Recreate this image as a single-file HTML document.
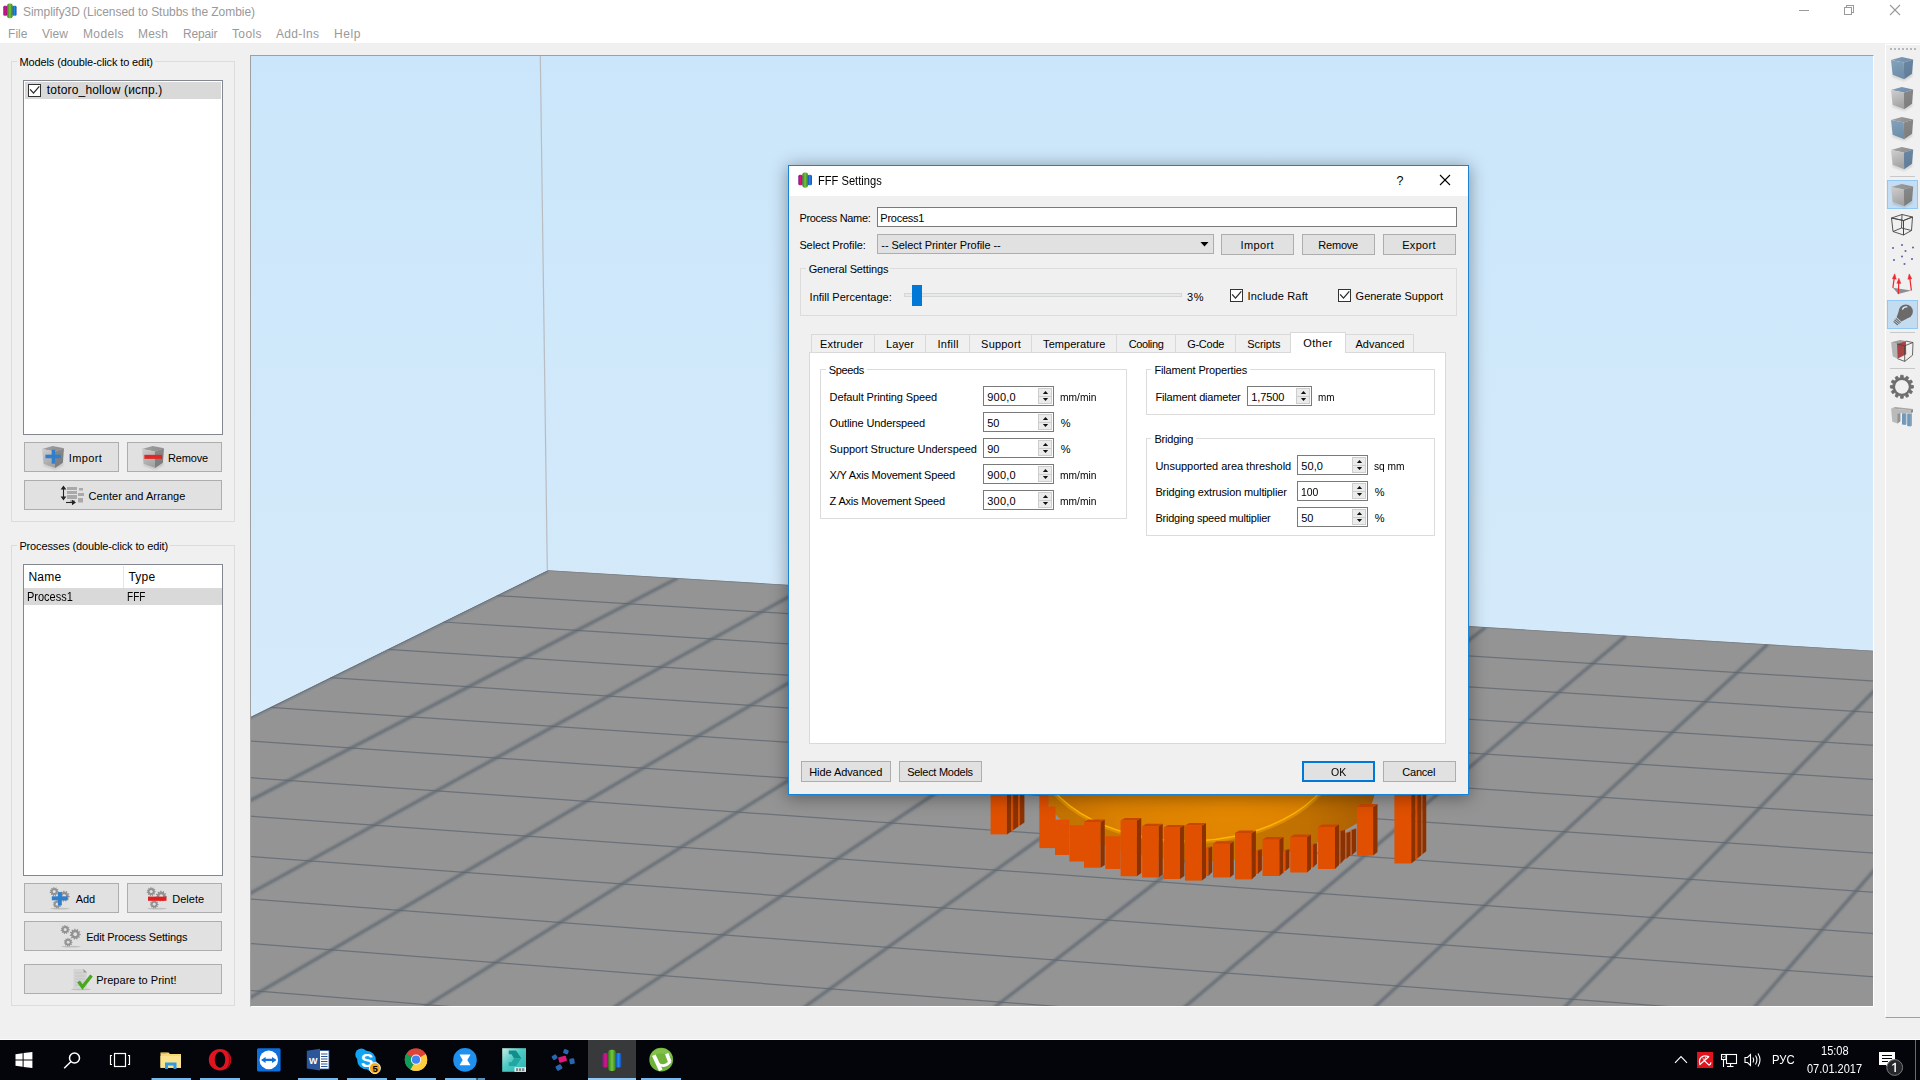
<!DOCTYPE html>
<html><head><meta charset="utf-8"><title>Simplify3D</title><style>
html,body{margin:0;padding:0;}
body{width:1920px;height:1080px;overflow:hidden;position:relative;background:#f0f0f0;font-family:"Liberation Sans",sans-serif;}
.t{position:absolute;white-space:nowrap;font-family:"Liberation Sans",sans-serif;}
.btn{position:absolute;box-sizing:border-box;background:#e1e1e1;border:1px solid #adadad;}
.gb{position:absolute;box-sizing:border-box;border:1px solid #dcdcdc;}
.abs{position:absolute;}
svg{position:absolute;overflow:visible;}
</style></head><body>
<div style="position:absolute;left:250px;top:55px;width:1624px;height:952px;box-sizing:border-box;border-top:1px solid #a0a0a0;border-left:1px solid #a0a0a0;border-right:1px solid #fff;border-bottom:1px solid #fff;"></div>
<svg style="left:251px;top:56px" width="1622" height="950" viewBox="251 56 1622 950"><defs><linearGradient id="sky" x1="0" y1="0" x2="0" y2="1"><stop offset="0" stop-color="#cbe6fa"/><stop offset="1" stop-color="#d6ebfb"/></linearGradient><clipPath id="vp"><rect x="251" y="56" width="1622" height="950"/></clipPath><radialGradient id="dome" cx="1230" cy="800" r="190" gradientUnits="userSpaceOnUse"><stop offset="0" stop-color="#e48800"/><stop offset="0.6" stop-color="#db8000"/><stop offset="1" stop-color="#c26e00"/></radialGradient><linearGradient id="dome2" x1="1040" y1="0" x2="1375" y2="0" gradientUnits="userSpaceOnUse"><stop offset="0" stop-color="#c27200"/><stop offset="0.45" stop-color="#c97800"/><stop offset="0.8" stop-color="#c07000"/><stop offset="1" stop-color="#a85c00"/></linearGradient><filter id="bl" x="-5%" y="-5%" width="110%" height="110%"><feGaussianBlur stdDeviation="0.45"/></filter><filter id="bl2" x="-5%" y="-5%" width="110%" height="110%"><feGaussianBlur stdDeviation="1.1"/></filter></defs><rect x="251" y="56" width="1622" height="700" fill="url(#sky)"/><line x1="540.3" y1="56" x2="547.3" y2="570" stroke="#b9bcc0" stroke-width="1.2"/><clipPath id="fl"><polygon points="548.0,570.2 1873,650.7 1873,1006 251,1006 251,716.8"/></clipPath><polygon points="548.0,570.2 1873,650.7 1873,1006 251,1006 251,716.8" fill="#949494"/><g clip-path="url(#fl)"><line x1="548.0" y1="571.7" x2="75.4" y2="805.0" stroke="#858a8f" stroke-width="3" /><line x1="548.0" y1="570.6" x2="75.4" y2="803.9" stroke="#6c727a" stroke-width="1.2" /><line x1="548.0" y1="570.5" x2="2056.3" y2="662.1" stroke="#7d8288" stroke-width="1.2" /><g stroke="#5d666f" stroke-opacity="0.75" stroke-width="1.25" filter="url(#bl)"><line x1="496.5" y1="595.6" x2="2332.2" y2="709.4"/><line x1="443.1" y1="622.0" x2="2311.7" y2="740.2"/><line x1="387.7" y1="649.3" x2="2290.4" y2="772.3"/><line x1="330.1" y1="677.7" x2="2268.2" y2="805.7"/><line x1="270.2" y1="707.3" x2="2245.0" y2="840.6"/><line x1="207.9" y1="738.1" x2="2220.8" y2="877.0"/><line x1="143.0" y1="770.1" x2="2195.4" y2="915.0"/><line x1="75.4" y1="803.5" x2="2169.0" y2="954.9"/><line x1="4.9" y1="838.3" x2="2141.2" y2="996.6"/><line x1="-68.8" y1="874.7" x2="2112.2" y2="1040.3"/><line x1="-145.8" y1="912.7" x2="2081.7" y2="1086.2"/><line x1="-226.4" y1="952.5" x2="2049.6" y2="1134.4"/><line x1="-310.7" y1="994.1" x2="2015.9" y2="1185.1"/><line x1="-399.2" y1="1037.8" x2="1980.3" y2="1238.6"/></g><g stroke="#5d666f" stroke-opacity="0.8" stroke-width="3.2" filter="url(#bl2)"><line x1="677.4" y1="578.1" x2="-322.0" y2="1098.4"/><line x1="808.4" y1="586.0" x2="-149.3" y2="1113.4"/><line x1="940.8" y1="594.1" x2="26.0" y2="1128.6"/><line x1="1074.6" y1="602.2" x2="204.2" y2="1144.1"/><line x1="1210.1" y1="610.4" x2="385.1" y2="1159.8"/><line x1="1347.1" y1="618.7" x2="568.9" y2="1175.7"/><line x1="1485.6" y1="627.2" x2="755.7" y2="1192.0"/><line x1="1625.8" y1="635.7" x2="945.5" y2="1208.4"/><line x1="1767.6" y1="644.3" x2="1138.5" y2="1225.2"/><line x1="1911.1" y1="653.0" x2="1334.6" y2="1242.2"/><line x1="2056.3" y1="661.8" x2="1533.9" y2="1259.5"/><line x1="2203.2" y1="670.8" x2="1736.7" y2="1277.1"/><line x1="2351.9" y1="679.8" x2="1942.8" y2="1295.0"/></g></g><g clip-path="url(#vp)"><path d="M1043,780 L1043.75,795 Q1049,812 1075,832 Q1130,862 1210,861 Q1300,858 1356,824 Q1372,810 1374.4,795 L1374.4,780 Z" fill="url(#dome2)"/><ellipse cx="1187.5" cy="745" rx="153.2" ry="97.2" fill="none" stroke="#f0a000" stroke-width="3.6" stroke-opacity="0.55"/><ellipse cx="1187.5" cy="745" rx="152" ry="96" fill="url(#dome)" stroke="#ffb400" stroke-width="1.5"/><rect x="990.60" y="780.00" width="16.30" height="54.40" fill="#e05000"/><polygon points="1006.90,780 1011.25,780 1011.25,831.44 1006.90,834.40" fill="#8c3200"/><polygon points="1011.25,780 1013.10,780 1013.10,830.18 1011.25,831.44" fill="#d44c00"/><polygon points="1013.10,780 1018.10,780 1018.10,826.78 1013.10,830.18" fill="#8c3200"/><polygon points="1018.10,780 1020.00,780 1020.00,825.49 1018.10,826.78" fill="#d44c00"/><polygon points="1020.00,780 1024.40,780 1024.40,822.50 1020.00,825.49" fill="#8c3200"/><rect x="1039.40" y="780.00" width="9.20" height="28.00" fill="#e05000"/><rect x="1039.40" y="806.50" width="16.20" height="41.60" fill="#e05000"/><rect x="1055.00" y="819.60" width="14.40" height="35.40" fill="#e05000"/><rect x="1069.40" y="825.20" width="14.60" height="36.30" fill="#e05000"/><rect x="1084.00" y="822.00" width="16.60" height="45.75" fill="#e05000"/><polygon points="1100.60,822.00 1104.75,819.50 1104.75,865.00 1100.60,867.75" fill="#8c3200"/><polygon points="1084.00,822.00 1100.60,822.00 1104.75,819.50 1088.15,819.50" fill="#c84600"/><rect x="1105.40" y="836.25" width="15.20" height="32.75" fill="#e05000"/><rect x="1120.60" y="820.60" width="16.30" height="55.65" fill="#e05000"/><polygon points="1136.90,820.60 1141.25,818.10 1141.25,873.00 1136.90,876.25" fill="#8c3200"/><polygon points="1120.60,820.60 1136.90,820.60 1141.25,818.10 1124.95,818.10" fill="#c84600"/><rect x="1142.10" y="826.25" width="16.65" height="51.25" fill="#e05000"/><polygon points="1158.75,826.25 1162.75,823.75 1162.75,874.50 1158.75,877.50" fill="#8c3200"/><polygon points="1142.10,826.25 1158.75,826.25 1162.75,823.75 1146.10,823.75" fill="#c84600"/><rect x="1163.75" y="827.50" width="16.25" height="51.50" fill="#e05000"/><polygon points="1180.00,827.50 1184.40,825.00 1184.40,876.00 1180.00,879.00" fill="#8c3200"/><polygon points="1163.75,827.50 1180.00,827.50 1184.40,825.00 1168.15,825.00" fill="#c84600"/><rect x="1185.00" y="825.60" width="16.90" height="55.00" fill="#e05000"/><polygon points="1201.90,825.60 1206.00,823.10 1206.00,877.50 1201.90,880.60" fill="#8c3200"/><polygon points="1185.00,825.60 1201.90,825.60 1206.00,823.10 1189.10,823.10" fill="#c84600"/><rect x="1206.00" y="848.00" width="2.40" height="28.00" fill="#e05000"/><polygon points="1208.40,848.00 1212.25,846.50 1212.25,872.00 1208.40,876.00" fill="#8c3200"/><polygon points="1206.00,848.00 1208.40,848.00 1212.25,846.50 1209.85,846.50" fill="#c84600"/><rect x="1213.00" y="843.75" width="17.00" height="33.75" fill="#e05000"/><polygon points="1230.00,843.75 1233.75,841.25 1233.75,874.40 1230.00,877.50" fill="#8c3200"/><polygon points="1213.00,843.75 1230.00,843.75 1233.75,841.25 1216.75,841.25" fill="#c84600"/><rect x="1235.00" y="833.00" width="16.50" height="46.40" fill="#e05000"/><polygon points="1251.50,833.00 1255.90,830.50 1255.90,875.60 1251.50,879.40" fill="#8c3200"/><polygon points="1235.00,833.00 1251.50,833.00 1255.90,830.50 1239.40,830.50" fill="#c84600"/><rect x="1255.90" y="850.60" width="1.85" height="23.40" fill="#e05000"/><polygon points="1257.75,850.60 1261.90,849.10 1261.90,870.00 1257.75,874.00" fill="#8c3200"/><polygon points="1255.90,850.60 1257.75,850.60 1261.90,849.10 1260.05,849.10" fill="#c84600"/><rect x="1262.50" y="839.40" width="16.90" height="36.60" fill="#e05000"/><polygon points="1279.40,839.40 1283.50,836.90 1283.50,872.50 1279.40,876.00" fill="#8c3200"/><polygon points="1262.50,839.40 1279.40,839.40 1283.50,836.90 1266.60,836.90" fill="#c84600"/><rect x="1283.50" y="850.60" width="1.90" height="20.40" fill="#e05000"/><polygon points="1285.40,850.60 1289.40,849.10 1289.40,867.50 1285.40,871.00" fill="#8c3200"/><polygon points="1283.50,850.60 1285.40,850.60 1289.40,849.10 1287.50,849.10" fill="#c84600"/><rect x="1290.25" y="836.90" width="16.85" height="35.60" fill="#e05000"/><polygon points="1307.10,836.90 1311.00,834.40 1311.00,869.00 1307.10,872.50" fill="#8c3200"/><polygon points="1290.25,836.90 1307.10,836.90 1311.00,834.40 1294.15,834.40" fill="#c84600"/><rect x="1311.00" y="844.40" width="2.10" height="23.10" fill="#e05000"/><polygon points="1313.10,844.40 1316.90,842.90 1316.90,863.75 1313.10,867.50" fill="#8c3200"/><polygon points="1311.00,844.40 1313.10,844.40 1316.90,842.90 1314.80,842.90" fill="#c84600"/><rect x="1318.10" y="826.90" width="16.90" height="42.10" fill="#e05000"/><polygon points="1335.00,826.90 1339.00,824.40 1339.00,865.00 1335.00,869.00" fill="#8c3200"/><polygon points="1318.10,826.90 1335.00,826.90 1339.00,824.40 1322.10,824.40" fill="#c84600"/><rect x="1339.00" y="831.25" width="1.50" height="32.50" fill="#e05000"/><polygon points="1340.50,831.25 1345.00,829.75 1345.00,858.75 1340.50,863.75" fill="#8c3200"/><polygon points="1339.00,831.25 1340.50,831.25 1345.00,829.75 1343.50,829.75" fill="#c84600"/><rect x="1345.00" y="833.00" width="1.50" height="25.75" fill="#e05000"/><polygon points="1346.50,833.00 1350.60,831.50 1350.60,855.00 1346.50,858.75" fill="#8c3200"/><polygon points="1345.00,833.00 1346.50,833.00 1350.60,831.50 1349.10,831.50" fill="#c84600"/><rect x="1350.60" y="830.00" width="1.40" height="25.00" fill="#e05000"/><polygon points="1352.00,830.00 1356.25,828.50 1356.25,851.25 1352.00,855.00" fill="#8c3200"/><polygon points="1350.60,830.00 1352.00,830.00 1356.25,828.50 1354.85,828.50" fill="#c84600"/><rect x="1356.90" y="806.90" width="16.20" height="48.70" fill="#e05000"/><polygon points="1373.10,806.90 1377.50,803.90 1377.50,852.00 1373.10,855.60" fill="#8c3200"/><polygon points="1356.90,806.90 1373.10,806.90 1377.50,803.90 1361.30,803.90" fill="#c84600"/><rect x="1394.40" y="780.00" width="16.85" height="83.50" fill="#e05000"/><polygon points="1411.25,780 1415.60,780 1415.60,859.95 1411.25,863.50" fill="#8c3200"/><polygon points="1415.60,780 1417.25,780 1417.25,858.60 1415.60,859.95" fill="#d44c00"/><polygon points="1417.25,780 1421.25,780 1421.25,855.33 1417.25,858.60" fill="#8c3200"/><polygon points="1421.25,780 1422.50,780 1422.50,854.31 1421.25,855.33" fill="#d44c00"/><polygon points="1422.50,780 1426.25,780 1426.25,851.25 1422.50,854.31" fill="#8c3200"/></g></svg>
<div style="position:absolute;left:0px;top:0px;width:1920px;height:43px;background:#fff;"></div>
<svg style="left:3.1px;top:3.3px" width="13.8" height="15.64" viewBox="0 0 15 17"><defs><linearGradient id="ai13" x1="0" x2="1"><stop offset="0" stop-color="#7a1a8c"/><stop offset="0.5" stop-color="#e0107a"/><stop offset="1" stop-color="#7a1a8c"/></linearGradient><linearGradient id="ai23" x1="0" x2="1"><stop offset="0" stop-color="#2f7a1c"/><stop offset="0.5" stop-color="#7ac83c"/><stop offset="1" stop-color="#2f7a1c"/></linearGradient><linearGradient id="ai33" x1="0" x2="1"><stop offset="0" stop-color="#1c3fae"/><stop offset="0.5" stop-color="#1e8fe8"/><stop offset="1" stop-color="#1c3fae"/></linearGradient></defs><rect x="0.3" y="3" width="4.6" height="11" rx="1.6" fill="url(#ai13)"/><rect x="10.1" y="3" width="4.6" height="11" rx="1.6" fill="url(#ai33)"/><rect x="4.6" y="0.5" width="5.8" height="16" rx="2.2" fill="url(#ai23)"/></svg>
<span id="t1" class="t" style="left:23.00px;top:4.76px;font-size:12px;line-height:15px;color:#999;letter-spacing:-0.051px;">Simplify3D (Licensed to Stubbs the Zombie)</span>
<span id="t2" class="t" style="left:8.00px;top:26.66px;font-size:12px;line-height:15px;color:#999;letter-spacing:0.052px;">File</span>
<span id="t3" class="t" style="left:42.00px;top:26.66px;font-size:12px;line-height:15px;color:#999;letter-spacing:0.068px;">View</span>
<span id="t4" class="t" style="left:83.00px;top:26.66px;font-size:12px;line-height:15px;color:#999;letter-spacing:0.362px;">Models</span>
<span id="t5" class="t" style="left:138.00px;top:26.66px;font-size:12px;line-height:15px;color:#999;letter-spacing:0.219px;">Mesh</span>
<span id="t6" class="t" style="left:183.00px;top:26.66px;font-size:12px;line-height:15px;color:#999;letter-spacing:-0.172px;">Repair</span>
<span id="t7" class="t" style="left:232.00px;top:26.66px;font-size:12px;line-height:15px;color:#999;letter-spacing:0.371px;">Tools</span>
<span id="t8" class="t" style="left:276.00px;top:26.66px;font-size:12px;line-height:15px;color:#999;letter-spacing:0.273px;">Add-Ins</span>
<span id="t9" class="t" style="left:334.00px;top:26.66px;font-size:12px;line-height:15px;color:#999;letter-spacing:0.604px;">Help</span>
<svg style="left:1780px;top:0" width="140" height="22" viewBox="1780 0 140 22"><g stroke="#9a9a9a" stroke-width="1" fill="none" shape-rendering="crispEdges"><line x1="1799" y1="10.5" x2="1809" y2="10.5"/><rect x="1844.5" y="7.5" width="7" height="7"/><polyline points="1846.5,7.5 1846.5,5.5 1853.5,5.5 1853.5,12.5 1851.5,12.5"/></g><g stroke="#9a9a9a" stroke-width="1.1" fill="none"><line x1="1890" y1="5" x2="1900" y2="15"/><line x1="1900" y1="5" x2="1890" y2="15"/></g></svg>
<div style="position:absolute;left:0px;top:1039px;width:1920px;height:1px;background:#fbfbfb;"></div>
<div class="gb" style="left:11px;top:61px;width:224px;height:461px;"></div>
<div style="position:absolute;left:17px;top:54px;width:138px;height:14px;background:#f0f0f0;"></div>
<span id="t10" class="t" style="left:19.50px;top:55.34px;font-size:11px;line-height:14px;color:#000;letter-spacing:-0.123px;">Models (double-click to edit)</span>
<div style="position:absolute;left:23px;top:80px;width:200px;height:355px;box-sizing:border-box;border:1px solid #828790;background:#fff;"></div>
<div style="position:absolute;left:25px;top:82px;width:196px;height:17px;background:#d9d9d9;"></div>
<svg style="left:28px;top:84px" width="13" height="13" viewBox="0 0 13 13"><rect x="0.5" y="0.5" width="12" height="12" fill="#fff" stroke="#333"/><polyline points="2.1,5.4 5.5,9.1 11.3,2.3" fill="none" stroke="#2a2a2a" stroke-width="1.3"/></svg>
<span id="t11" class="t" style="left:46.80px;top:83.46px;font-size:12px;line-height:15px;color:#000;letter-spacing:0.179px;">totoro_hollow (испр.)</span>
<svg style="left:0;top:0" width="0" height="0"><defs><linearGradient id="cgl" x1="0" y1="0" x2="0.3" y2="1"><stop offset="0" stop-color="#cfcfcf"/><stop offset="1" stop-color="#a4a4a4"/></linearGradient><linearGradient id="cgr" x1="0" y1="0" x2="0.2" y2="1"><stop offset="0" stop-color="#8a8a8a"/><stop offset="1" stop-color="#7c7c7c"/></linearGradient><linearGradient id="cgt" x1="0" y1="0" x2="1" y2="0"><stop offset="0" stop-color="#a2a2a2"/><stop offset="1" stop-color="#8c8c8c"/></linearGradient><linearGradient id="cbl" x1="0" y1="0" x2="0.3" y2="1"><stop offset="0" stop-color="#86a3bc"/><stop offset="1" stop-color="#6f8ea9"/></linearGradient><linearGradient id="cbr" x1="0" y1="0" x2="0.2" y2="1"><stop offset="0" stop-color="#6c87a2"/><stop offset="1" stop-color="#607c98"/></linearGradient><linearGradient id="cbt" x1="0" y1="0" x2="1" y2="0"><stop offset="0" stop-color="#7f9db8"/><stop offset="1" stop-color="#6f8dab"/></linearGradient><filter id="sh" x="-20%" y="-50%" width="140%" height="200%"><feGaussianBlur stdDeviation="0.9"/></filter></defs></svg>
<div class="btn" style="left:24px;top:442px;width:95px;height:30px;"></div>
<svg style="left:41.9px;top:445.8px" width="22.6" height="22.6" viewBox="0 0 23 23"><polygon points="1.6,18 13.3,22.4 21.3,17 21.5,19 13.3,23.6 1.6,19.6" fill="#000" fill-opacity="0.22" filter="url(#sh)"/><polygon points="0,3.1 10.9,0 22.4,2.4 12.9,5.5" fill="url(#cgt)"/><polygon points="0,3.1 12.9,5.5 13.3,22.4 1.6,18" fill="url(#cgl)"/><polygon points="12.9,5.5 22.4,2.4 21.3,17 13.3,22.4" fill="url(#cgr)"/><rect x="9.85" y="3.8" width="3.5" height="14.2" fill="#2f7fcc"/><rect x="3.5" y="8.8" width="15.6" height="3.7" fill="#2f7fcc"/></svg>
<span id="t12" class="t" style="left:68.70px;top:451.04px;font-size:11px;line-height:14px;color:#000;letter-spacing:0.403px;">Import</span>
<div class="btn" style="left:127px;top:442px;width:95px;height:30px;"></div>
<svg style="left:141.7px;top:445.8px" width="22.6" height="22.6" viewBox="0 0 23 23"><polygon points="1.6,18 13.3,22.4 21.3,17 21.5,19 13.3,23.6 1.6,19.6" fill="#000" fill-opacity="0.22" filter="url(#sh)"/><polygon points="0,3.1 10.9,0 22.4,2.4 12.9,5.5" fill="url(#cgt)"/><polygon points="0,3.1 12.9,5.5 13.3,22.4 1.6,18" fill="url(#cgl)"/><polygon points="12.9,5.5 22.4,2.4 21.3,17 13.3,22.4" fill="url(#cgr)"/><rect x="2.4" y="9" width="18.1" height="4.1" fill="#e22626"/></svg>
<span id="t13" class="t" style="left:168.10px;top:451.04px;font-size:11px;line-height:14px;color:#000;letter-spacing:-0.174px;">Remove</span>
<div class="btn" style="left:24px;top:480px;width:198px;height:30px;"></div>
<svg style="left:61px;top:486px" width="24" height="19" viewBox="0 0 24 19"><g fill="#a9a9a9"><rect x="6" y="1" width="10" height="3"/><rect x="6" y="5" width="10" height="3"/><rect x="6" y="9" width="10" height="4"/><rect x="18" y="2" width="4" height="2.5"/><rect x="17" y="7" width="6" height="3"/><rect x="17" y="12" width="5" height="4.5"/><rect x="9" y="14" width="5" height="3"/></g><g stroke="#222" stroke-width="1.1" fill="#222"><line x1="2.5" y1="2.5" x2="2.5" y2="11.5"/><polygon points="2.5,0.5 4.3,3 0.7,3"/><polygon points="2.5,13.5 4.3,11 0.7,11"/><line x1="5" y1="16.5" x2="12" y2="16.5"/><polygon points="14,16.5 11.5,14.8 11.5,18.2"/></g></svg>
<span id="t14" class="t" style="left:88.60px;top:488.84px;font-size:11px;line-height:14px;color:#000;letter-spacing:0.046px;">Center and Arrange</span>
<div class="gb" style="left:11px;top:545px;width:224px;height:461px;"></div>
<div style="position:absolute;left:17px;top:538px;width:153px;height:14px;background:#f0f0f0;"></div>
<span id="t15" class="t" style="left:19.40px;top:538.84px;font-size:11px;line-height:14px;color:#000;letter-spacing:-0.134px;">Processes (double-click to edit)</span>
<div style="position:absolute;left:23px;top:564px;width:200px;height:312px;box-sizing:border-box;border:1px solid #828790;background:#fff;"></div>
<span id="t16" class="t" style="left:28.50px;top:569.86px;font-size:12px;line-height:15px;color:#000;letter-spacing:0.195px;">Name</span>
<div style="position:absolute;left:123px;top:566px;width:1px;height:22px;background:#e5e5e5;"></div>
<span id="t17" class="t" style="left:128.40px;top:569.86px;font-size:12px;line-height:15px;color:#000;letter-spacing:0.261px;">Type</span>
<div style="position:absolute;left:24px;top:588px;width:198px;height:17px;background:#d9d9d9;"></div>
<span id="t18" class="t" style="left:27.10px;top:589.76px;font-size:12px;line-height:15px;color:#000;letter-spacing:0.000px;transform:scaleX(0.9154);transform-origin:0 0;">Process1</span>
<span id="t19" class="t" style="left:127.30px;top:589.76px;font-size:12px;line-height:15px;color:#000;letter-spacing:0.000px;transform:scaleX(0.8364);transform-origin:0 0;">FFF</span>
<div class="btn" style="left:24px;top:883px;width:95px;height:30px;"></div>
<svg style="left:48.8px;top:886px" width="22" height="24" viewBox="0 0 22 24"><ellipse cx="11" cy="22.6" rx="10" ry="0.9" fill="#000" fill-opacity="0.15"/><polygon points="9.80,5.60 9.75,6.25 8.55,6.58 8.38,7.05 9.07,8.09 8.68,8.61 7.49,8.24 7.09,8.54 7.11,9.78 6.50,10.01 5.70,9.06 5.20,9.10 4.55,10.15 3.90,10.01 3.75,8.78 3.31,8.54 2.19,9.08 1.72,8.61 2.26,7.49 2.02,7.05 0.79,6.90 0.65,6.25 1.70,5.60 1.74,5.10 0.79,4.30 1.02,3.69 2.26,3.71 2.56,3.31 2.19,2.12 2.71,1.73 3.75,2.42 4.22,2.25 4.55,1.05 5.20,1.00 5.70,2.14 6.18,2.25 7.11,1.42 7.69,1.73 7.49,2.96 7.84,3.31 9.07,3.11 9.38,3.69 8.55,4.62 8.66,5.10" fill="#929292"/><circle cx="5.20" cy="5.60" r="1.52" fill="#e1e1e1"/><polygon points="20.80,10.20 20.74,11.00 19.28,11.40 19.07,11.97 19.91,13.23 19.43,13.87 17.99,13.42 17.50,13.78 17.53,15.29 16.78,15.57 15.81,14.41 15.20,14.46 14.40,15.74 13.62,15.57 13.43,14.07 12.90,13.78 11.53,14.43 10.97,13.87 11.62,12.50 11.33,11.97 9.83,11.78 9.66,11.00 10.94,10.20 10.99,9.59 9.83,8.62 10.11,7.87 11.62,7.90 11.98,7.41 11.53,5.97 12.17,5.49 13.43,6.33 14.00,6.12 14.40,4.66 15.20,4.60 15.81,5.99 16.40,6.12 17.53,5.11 18.23,5.49 17.99,6.98 18.42,7.41 19.91,7.17 20.29,7.87 19.28,9.00 19.41,9.59" fill="#929292"/><circle cx="15.20" cy="10.20" r="1.85" fill="#e1e1e1"/><polygon points="12.60,18.20 12.56,18.83 11.41,19.14 11.24,19.59 11.90,20.58 11.53,21.08 10.39,20.73 10.01,21.01 10.03,22.20 9.44,22.42 8.68,21.51 8.20,21.54 7.57,22.56 6.96,22.42 6.81,21.24 6.39,21.01 5.32,21.53 4.87,21.08 5.39,20.01 5.16,19.59 3.98,19.44 3.84,18.83 4.86,18.20 4.89,17.72 3.98,16.96 4.20,16.37 5.39,16.39 5.67,16.01 5.32,14.87 5.82,14.50 6.81,15.16 7.26,14.99 7.57,13.84 8.20,13.80 8.68,14.89 9.14,14.99 10.03,14.20 10.58,14.50 10.39,15.67 10.73,16.01 11.90,15.82 12.20,16.37 11.41,17.26 11.51,17.72" fill="#929292"/><circle cx="8.20" cy="18.20" r="1.45" fill="#e1e1e1"/><rect x="8.9" y="6.1" width="3.9" height="13.3" fill="#2f7fcc"/><rect x="2.8" y="10.3" width="15.8" height="4" fill="#2f7fcc"/></svg>
<span id="t20" class="t" style="left:75.80px;top:891.64px;font-size:11px;line-height:14px;color:#000;letter-spacing:-0.139px;">Add</span>
<div class="btn" style="left:127px;top:883px;width:95px;height:30px;"></div>
<svg style="left:145.6px;top:886px" width="22" height="24" viewBox="0 0 22 24"><ellipse cx="11" cy="22.6" rx="10" ry="0.9" fill="#000" fill-opacity="0.15"/><polygon points="9.80,5.60 9.75,6.25 8.55,6.58 8.38,7.05 9.07,8.09 8.68,8.61 7.49,8.24 7.09,8.54 7.11,9.78 6.50,10.01 5.70,9.06 5.20,9.10 4.55,10.15 3.90,10.01 3.75,8.78 3.31,8.54 2.19,9.08 1.72,8.61 2.26,7.49 2.02,7.05 0.79,6.90 0.65,6.25 1.70,5.60 1.74,5.10 0.79,4.30 1.02,3.69 2.26,3.71 2.56,3.31 2.19,2.12 2.71,1.73 3.75,2.42 4.22,2.25 4.55,1.05 5.20,1.00 5.70,2.14 6.18,2.25 7.11,1.42 7.69,1.73 7.49,2.96 7.84,3.31 9.07,3.11 9.38,3.69 8.55,4.62 8.66,5.10" fill="#929292"/><circle cx="5.20" cy="5.60" r="1.52" fill="#e1e1e1"/><polygon points="20.80,10.20 20.74,11.00 19.28,11.40 19.07,11.97 19.91,13.23 19.43,13.87 17.99,13.42 17.50,13.78 17.53,15.29 16.78,15.57 15.81,14.41 15.20,14.46 14.40,15.74 13.62,15.57 13.43,14.07 12.90,13.78 11.53,14.43 10.97,13.87 11.62,12.50 11.33,11.97 9.83,11.78 9.66,11.00 10.94,10.20 10.99,9.59 9.83,8.62 10.11,7.87 11.62,7.90 11.98,7.41 11.53,5.97 12.17,5.49 13.43,6.33 14.00,6.12 14.40,4.66 15.20,4.60 15.81,5.99 16.40,6.12 17.53,5.11 18.23,5.49 17.99,6.98 18.42,7.41 19.91,7.17 20.29,7.87 19.28,9.00 19.41,9.59" fill="#929292"/><circle cx="15.20" cy="10.20" r="1.85" fill="#e1e1e1"/><polygon points="12.60,18.20 12.56,18.83 11.41,19.14 11.24,19.59 11.90,20.58 11.53,21.08 10.39,20.73 10.01,21.01 10.03,22.20 9.44,22.42 8.68,21.51 8.20,21.54 7.57,22.56 6.96,22.42 6.81,21.24 6.39,21.01 5.32,21.53 4.87,21.08 5.39,20.01 5.16,19.59 3.98,19.44 3.84,18.83 4.86,18.20 4.89,17.72 3.98,16.96 4.20,16.37 5.39,16.39 5.67,16.01 5.32,14.87 5.82,14.50 6.81,15.16 7.26,14.99 7.57,13.84 8.20,13.80 8.68,14.89 9.14,14.99 10.03,14.20 10.58,14.50 10.39,15.67 10.73,16.01 11.90,15.82 12.20,16.37 11.41,17.26 11.51,17.72" fill="#929292"/><circle cx="8.20" cy="18.20" r="1.45" fill="#e1e1e1"/><rect x="2" y="10.6" width="18.5" height="4.2" fill="#e02020"/></svg>
<span id="t21" class="t" style="left:172.20px;top:891.64px;font-size:11px;line-height:14px;color:#000;letter-spacing:0.021px;">Delete</span>
<div class="btn" style="left:24px;top:921px;width:198px;height:30px;"></div>
<svg style="left:60px;top:924px" width="22" height="24" viewBox="0 0 22 24"><ellipse cx="11" cy="22.6" rx="10" ry="0.9" fill="#000" fill-opacity="0.15"/><polygon points="9.80,5.60 9.75,6.25 8.55,6.58 8.38,7.05 9.07,8.09 8.68,8.61 7.49,8.24 7.09,8.54 7.11,9.78 6.50,10.01 5.70,9.06 5.20,9.10 4.55,10.15 3.90,10.01 3.75,8.78 3.31,8.54 2.19,9.08 1.72,8.61 2.26,7.49 2.02,7.05 0.79,6.90 0.65,6.25 1.70,5.60 1.74,5.10 0.79,4.30 1.02,3.69 2.26,3.71 2.56,3.31 2.19,2.12 2.71,1.73 3.75,2.42 4.22,2.25 4.55,1.05 5.20,1.00 5.70,2.14 6.18,2.25 7.11,1.42 7.69,1.73 7.49,2.96 7.84,3.31 9.07,3.11 9.38,3.69 8.55,4.62 8.66,5.10" fill="#929292"/><circle cx="5.20" cy="5.60" r="1.52" fill="#e1e1e1"/><polygon points="20.80,10.20 20.74,11.00 19.28,11.40 19.07,11.97 19.91,13.23 19.43,13.87 17.99,13.42 17.50,13.78 17.53,15.29 16.78,15.57 15.81,14.41 15.20,14.46 14.40,15.74 13.62,15.57 13.43,14.07 12.90,13.78 11.53,14.43 10.97,13.87 11.62,12.50 11.33,11.97 9.83,11.78 9.66,11.00 10.94,10.20 10.99,9.59 9.83,8.62 10.11,7.87 11.62,7.90 11.98,7.41 11.53,5.97 12.17,5.49 13.43,6.33 14.00,6.12 14.40,4.66 15.20,4.60 15.81,5.99 16.40,6.12 17.53,5.11 18.23,5.49 17.99,6.98 18.42,7.41 19.91,7.17 20.29,7.87 19.28,9.00 19.41,9.59" fill="#929292"/><circle cx="15.20" cy="10.20" r="1.85" fill="#e1e1e1"/><polygon points="12.60,18.20 12.56,18.83 11.41,19.14 11.24,19.59 11.90,20.58 11.53,21.08 10.39,20.73 10.01,21.01 10.03,22.20 9.44,22.42 8.68,21.51 8.20,21.54 7.57,22.56 6.96,22.42 6.81,21.24 6.39,21.01 5.32,21.53 4.87,21.08 5.39,20.01 5.16,19.59 3.98,19.44 3.84,18.83 4.86,18.20 4.89,17.72 3.98,16.96 4.20,16.37 5.39,16.39 5.67,16.01 5.32,14.87 5.82,14.50 6.81,15.16 7.26,14.99 7.57,13.84 8.20,13.80 8.68,14.89 9.14,14.99 10.03,14.20 10.58,14.50 10.39,15.67 10.73,16.01 11.90,15.82 12.20,16.37 11.41,17.26 11.51,17.72" fill="#929292"/><circle cx="8.20" cy="18.20" r="1.45" fill="#e1e1e1"/></svg>
<span id="t22" class="t" style="left:86.20px;top:929.84px;font-size:11px;line-height:14px;color:#000;letter-spacing:-0.168px;">Edit Process Settings</span>
<div class="btn" style="left:24px;top:964px;width:198px;height:30px;"></div>
<svg style="left:71px;top:967px" width="22" height="24" viewBox="0 0 22 24"><ellipse cx="10" cy="22.4" rx="10" ry="0.9" fill="#000" fill-opacity="0.15"/><polygon points="2.5,2 12.5,2 16,5.5 16,21.5 2.5,21.5" fill="#d4d4d4"/><polygon points="12.5,2 16,5.5 12.5,5.5" fill="#9a9a9a"/><g stroke="#c0c0c0" stroke-width="0.8"><line x1="4" y1="6" x2="11" y2="6"/><line x1="4" y1="9" x2="14" y2="9"/><line x1="4" y1="12" x2="14" y2="12"/><line x1="4" y1="15" x2="14" y2="15"/><line x1="4" y1="18" x2="14" y2="18"/></g><polyline points="7.5,14.5 11.5,20 20.5,8.5" fill="none" stroke="#4aa81e" stroke-width="3.4"/></svg>
<span id="t23" class="t" style="left:96.20px;top:973.04px;font-size:11px;line-height:14px;color:#000;letter-spacing:0.019px;">Prepare to Print!</span>
<div style="position:absolute;left:1885px;top:44px;width:36px;height:974px;box-sizing:border-box;border-left:1px solid #fff;border-top:1px solid #fff;border-bottom:1px solid #a0a0a0;"></div>
<svg style="left:0;top:0" width="1920" height="60" viewBox="0 0 1920 60"><rect x="1890" y="48" width="2" height="2" fill="#b8b8b8"/><rect x="1894" y="48" width="2" height="2" fill="#b8b8b8"/><rect x="1898" y="48" width="2" height="2" fill="#b8b8b8"/><rect x="1902" y="48" width="2" height="2" fill="#b8b8b8"/><rect x="1906" y="48" width="2" height="2" fill="#b8b8b8"/><rect x="1910" y="48" width="2" height="2" fill="#b8b8b8"/><rect x="1914" y="48" width="2" height="2" fill="#b8b8b8"/></svg>
<svg style="left:1890.7px;top:57.3px" width="22.8" height="22.8" viewBox="0 0 23 23"><polygon points="1.6,18 13.3,22.4 21.3,17 21.5,19 13.3,23.6 1.6,19.6" fill="#000" fill-opacity="0.22" filter="url(#sh)"/><polygon points="0,3.1 10.9,0 22.4,2.4 12.9,5.5" fill="url(#cbt)"/><polygon points="0,3.1 12.9,5.5 13.3,22.4 1.6,18" fill="url(#cbl)"/><polygon points="12.9,5.5 22.4,2.4 21.3,17 13.3,22.4" fill="url(#cbr)"/></svg>
<svg style="left:1890.7px;top:87.3px" width="22.8" height="22.8" viewBox="0 0 23 23"><polygon points="1.6,18 13.3,22.4 21.3,17 21.5,19 13.3,23.6 1.6,19.6" fill="#000" fill-opacity="0.22" filter="url(#sh)"/><polygon points="0,3.1 10.9,0 22.4,2.4 12.9,5.5" fill="url(#cbt)"/><polygon points="0,3.1 12.9,5.5 13.3,22.4 1.6,18" fill="url(#cgl)"/><polygon points="12.9,5.5 22.4,2.4 21.3,17 13.3,22.4" fill="url(#cgr)"/></svg>
<svg style="left:1890.7px;top:117.3px" width="22.8" height="22.8" viewBox="0 0 23 23"><polygon points="1.6,18 13.3,22.4 21.3,17 21.5,19 13.3,23.6 1.6,19.6" fill="#000" fill-opacity="0.22" filter="url(#sh)"/><polygon points="0,3.1 10.9,0 22.4,2.4 12.9,5.5" fill="url(#cgt)"/><polygon points="0,3.1 12.9,5.5 13.3,22.4 1.6,18" fill="url(#cbl)"/><polygon points="12.9,5.5 22.4,2.4 21.3,17 13.3,22.4" fill="url(#cgr)"/></svg>
<svg style="left:1890.7px;top:147.3px" width="22.8" height="22.8" viewBox="0 0 23 23"><polygon points="1.6,18 13.3,22.4 21.3,17 21.5,19 13.3,23.6 1.6,19.6" fill="#000" fill-opacity="0.22" filter="url(#sh)"/><polygon points="0,3.1 10.9,0 22.4,2.4 12.9,5.5" fill="url(#cgt)"/><polygon points="0,3.1 12.9,5.5 13.3,22.4 1.6,18" fill="url(#cgl)"/><polygon points="12.9,5.5 22.4,2.4 21.3,17 13.3,22.4" fill="url(#cbr)"/></svg>
<div style="position:absolute;left:1890px;top:176px;width:25px;height:1px;background:#c8c8c8;"></div>
<div style="position:absolute;left:1887px;top:180px;width:31px;height:29px;box-sizing:border-box;background:#c5ddf3;border:1px solid #90c8f6;"></div>
<svg style="left:1890.7px;top:184.3px" width="22.8" height="22.8" viewBox="0 0 23 23"><polygon points="1.6,18 13.3,22.4 21.3,17 21.5,19 13.3,23.6 1.6,19.6" fill="#000" fill-opacity="0.22" filter="url(#sh)"/><polygon points="0,3.1 10.9,0 22.4,2.4 12.9,5.5" fill="url(#cgt)"/><polygon points="0,3.1 12.9,5.5 13.3,22.4 1.6,18" fill="url(#cgl)"/><polygon points="12.9,5.5 22.4,2.4 21.3,17 13.3,22.4" fill="url(#cgr)"/></svg>
<svg style="left:1890px;top:213px" width="24" height="24" viewBox="0 0 24 24"><g fill="none" stroke="#444" stroke-width="0.9"><polygon points="1.5,5 12,1.5 22.5,4 13.5,7.5"/><polygon points="1.5,5 13.5,7.5 13.5,22 3,18.5"/><polygon points="13.5,7.5 22.5,4 21.5,17.5 13.5,22"/><polyline points="12,1.5 11.5,15 3,18.5"/><line x1="11.5" y1="15" x2="21.5" y2="17.5"/></g></svg>
<svg style="left:1890px;top:243px" width="24" height="24" viewBox="0 0 24 24"><circle cx="3" cy="5" r="1.05" fill="#5a69a2"/><circle cx="12" cy="2" r="1.05" fill="#5a69a2"/><circle cx="23" cy="4.5" r="1.05" fill="#5a69a2"/><circle cx="15.5" cy="8" r="1.05" fill="#5a69a2"/><circle cx="12" cy="13.5" r="1.05" fill="#5a69a2"/><circle cx="4" cy="17" r="1.05" fill="#5a69a2"/><circle cx="22" cy="16" r="1.05" fill="#5a69a2"/><circle cx="14.5" cy="21" r="1.05" fill="#5a69a2"/></svg>
<svg style="left:1890px;top:273px" width="24" height="24" viewBox="0 0 24 24"><polygon points="2.9,14.8 21.4,17.5 8.3,21.1" fill="#8e8e8e"/><g stroke="#ea2a30" stroke-width="1.25" fill="#ea2a30" stroke-linejoin="round"><line x1="2.9" y1="14.8" x2="4.3" y2="4"/><polygon points="4.7,0.8 6.3,6.2 2.4,5.7" stroke-width="0.5"/><line x1="8.3" y1="21.1" x2="8.8" y2="9"/><polygon points="8.9,5.2 10.8,10.4 6.9,10.3" stroke-width="0.5"/><line x1="21.4" y1="17.5" x2="19.7" y2="4"/><polygon points="19.2,0.9 21.8,5.8 17.9,6.3" stroke-width="0.5"/></g></svg>
<div style="position:absolute;left:1887px;top:300px;width:31px;height:29px;box-sizing:border-box;background:#c4dcf0;border:1px solid #90c8f6;"></div>
<svg style="left:1890px;top:303px" width="24" height="24" viewBox="0 0 24 24"><g fill="#6b6b6b"><circle cx="15.8" cy="8.5" r="7.1"/><polygon points="17.2,15.6 8.7,8.5 6.6,14.2 11.4,18.5"/></g><g stroke="#6b6b6b" stroke-width="1.15"><line x1="5.7" y1="15.4" x2="10.6" y2="19.6"/><line x1="4.5" y1="16.8" x2="9.4" y2="20.9"/><line x1="3.6" y1="18.4" x2="7.8" y2="22"/></g><path d="M12.6 6.2 Q13.6 3.6 16.8 3.9" stroke="#e8eef4" stroke-width="1.3" fill="none" stroke-linecap="round"/></svg>
<div style="position:absolute;left:1890px;top:332px;width:25px;height:1px;background:#c8c8c8;"></div>
<svg style="left:1890px;top:339px" width="24" height="24" viewBox="0 0 24 24"><polygon points="1.1,3.3 7,4.9 7.5,19.7 2.7,17.2" fill="#b4b4b4"/><polygon points="1.1,3.3 10.3,1.1 15.9,2.1 7,4.9" fill="#9e9e9e"/><polygon points="7,4.9 15.9,2.1 16.2,15.3 7.5,19.7" fill="#9a1c1c" fill-opacity="0.82"/><g fill="none" stroke="#444" stroke-width="0.8"><polyline points="15.9,2.1 23,3.5 14.7,6.8 7,4.9"/><polyline points="23,3.5 22.5,16.2 14.7,22.4 14.7,6.8"/><line x1="7.5" y1="19.7" x2="14.7" y2="22.4"/></g></svg>
<div style="position:absolute;left:1890px;top:368px;width:25px;height:1px;background:#c8c8c8;"></div>
<svg style="left:1889px;top:374px" width="26" height="26" viewBox="0 0 26 26"><polygon points="21.87,11.26 24.43,11.54 24.43,14.06 21.87,14.34 21.44,15.95 23.52,17.47 22.26,19.66 19.90,18.62 18.72,19.80 19.76,22.16 17.57,23.42 16.05,21.34 14.44,21.77 14.16,24.33 11.64,24.33 11.36,21.77 9.75,21.34 8.23,23.42 6.04,22.16 7.08,19.80 5.90,18.62 3.54,19.66 2.28,17.47 4.36,15.95 3.93,14.34 1.37,14.06 1.37,11.54 3.93,11.26 4.36,9.65 2.28,8.13 3.54,5.94 5.90,6.98 7.08,5.80 6.04,3.44 8.23,2.18 9.75,4.26 11.36,3.83 11.64,1.27 14.16,1.27 14.44,3.83 16.05,4.26 17.57,2.18 19.76,3.44 18.72,5.80 19.90,6.98 22.26,5.94 23.52,8.13 21.44,9.65" fill="#6e6e6e" stroke="#6e6e6e" stroke-width="0.8" stroke-linejoin="round"/><circle cx="12.9" cy="12.8" r="6.9" fill="#f0f0f0"/></svg>
<svg style="left:1890px;top:405px" width="24" height="24" viewBox="0 0 24 24"><polygon points="12,8.2 15.5,8.2 15.5,20 12,19.6" fill="#7098ba"/><polygon points="15.5,8.2 16.3,8.2 16.3,19.2 15.5,20" fill="#557a9c"/><polygon points="17.2,8.6 20.7,8.6 20.7,21.5 17.2,21" fill="#7098ba"/><polygon points="20.7,8.6 21.6,8.2 21.6,20.6 20.7,21.5" fill="#557a9c"/><polygon points="1.1,3.5 5.1,2.1 23,4 20.7,5.2" fill="#a6a6a6"/><polygon points="1.1,3.5 20.7,5.2 20.7,8.1 10.3,8.1 10.3,16.3 7.5,18.6 2.3,16.7" fill="#bababa"/><polygon points="20.7,5.2 23,4 23,7.3 20.7,8.1" fill="#8c8c8c"/><polygon points="7.5,9 10.3,8.1 10.3,16.3 7.5,18.6" fill="#929292"/></svg>
<div style="position:absolute;left:788px;top:165px;width:681px;height:630px;box-sizing:border-box;border:1px solid #1883d7;background:#f0f0f0;box-shadow:0 2px 16px 1px rgba(0,0,0,0.36);"></div>
<div style="position:absolute;left:789px;top:166px;width:679px;height:30px;background:#fff;"></div>
<svg style="left:797.5px;top:171.5px" width="14.25" height="16.15" viewBox="0 0 15 17"><defs><linearGradient id="ai1797" x1="0" x2="1"><stop offset="0" stop-color="#7a1a8c"/><stop offset="0.5" stop-color="#e0107a"/><stop offset="1" stop-color="#7a1a8c"/></linearGradient><linearGradient id="ai2797" x1="0" x2="1"><stop offset="0" stop-color="#2f7a1c"/><stop offset="0.5" stop-color="#7ac83c"/><stop offset="1" stop-color="#2f7a1c"/></linearGradient><linearGradient id="ai3797" x1="0" x2="1"><stop offset="0" stop-color="#1c3fae"/><stop offset="0.5" stop-color="#1e8fe8"/><stop offset="1" stop-color="#1c3fae"/></linearGradient></defs><rect x="0.3" y="3" width="4.6" height="11" rx="1.6" fill="url(#ai1797)"/><rect x="10.1" y="3" width="4.6" height="11" rx="1.6" fill="url(#ai3797)"/><rect x="4.6" y="0.5" width="5.8" height="16" rx="2.2" fill="url(#ai2797)"/></svg>
<span id="t24" class="t" style="left:818.30px;top:173.76px;font-size:12px;line-height:15px;color:#000;letter-spacing:0.000px;transform:scaleX(0.9274);transform-origin:0 0;">FFF Settings</span>
<svg style="left:1390px;top:170px" width="70" height="20" viewBox="1390 170 70 20"><text x="1396.500" y="185" font-family="Liberation Sans" font-size="12.500" fill="#000">?</text><g stroke="#000" stroke-width="1.100"><line x1="1440" y1="175" x2="1450" y2="185"/><line x1="1450" y1="175" x2="1440" y2="185"/></g></svg>
<span id="t25" class="t" style="left:799.40px;top:210.64px;font-size:11px;line-height:14px;color:#000;letter-spacing:-0.317px;">Process Name:</span>
<div style="position:absolute;left:877px;top:207px;width:580px;height:20px;box-sizing:border-box;border:1px solid #7a7a7a;background:#fff;"></div>
<span id="t26" class="t" style="left:880.30px;top:210.64px;font-size:11px;line-height:14px;color:#000;letter-spacing:-0.237px;">Process1</span>
<span id="t27" class="t" style="left:799.40px;top:238.44px;font-size:11px;line-height:14px;color:#000;letter-spacing:-0.105px;">Select Profile:</span>
<div class="btn" style="left:877px;top:234px;width:337px;height:20px;"></div>
<span id="t28" class="t" style="left:881.30px;top:238.44px;font-size:11px;line-height:14px;color:#000;letter-spacing:-0.057px;">-- Select Printer Profile --</span>
<svg style="left:1200px;top:242px" width="9" height="5" viewBox="0 0 9 5"><polygon points="0.500,0 8.500,0 4.500,4.500" fill="#000"/></svg>
<div class="btn" style="left:1221px;top:234px;width:73px;height:21px;"></div>
<span id="t29" class="t" style="left:1240.60px;top:238.44px;font-size:11px;line-height:14px;color:#000;letter-spacing:0.362px;">Import</span>
<div class="btn" style="left:1302px;top:234px;width:73px;height:21px;"></div>
<span id="t30" class="t" style="left:1318.30px;top:238.44px;font-size:11px;line-height:14px;color:#000;letter-spacing:-0.214px;">Remove</span>
<div class="btn" style="left:1383px;top:234px;width:73px;height:21px;"></div>
<span id="t31" class="t" style="left:1402.20px;top:238.44px;font-size:11px;line-height:14px;color:#000;letter-spacing:0.321px;">Export</span>
<div class="gb" style="left:800px;top:268px;width:657px;height:48px;"></div>
<div style="position:absolute;left:806px;top:262px;width:84px;height:13px;background:#f0f0f0;"></div>
<span id="t32" class="t" style="left:808.70px;top:261.74px;font-size:11px;line-height:14px;color:#000;letter-spacing:-0.149px;">General Settings</span>
<span id="t33" class="t" style="left:809.60px;top:290.44px;font-size:11px;line-height:14px;color:#000;letter-spacing:0.010px;">Infill Percentage:</span>
<div style="position:absolute;left:904px;top:293px;width:278px;height:4px;box-sizing:border-box;border:1px solid #d6d6d6;background:#e7eaea;"></div>
<div style="position:absolute;left:912px;top:285px;width:10px;height:21px;background:#0078d7;"></div>
<span id="t34" class="t" style="left:1187.00px;top:290.44px;font-size:11px;line-height:14px;color:#000;letter-spacing:0.694px;">3%</span>
<svg style="left:1230px;top:289px" width="13" height="13" viewBox="0 0 13 13"><rect x="0.500" y="0.500" width="12" height="12" fill="#fff" stroke="#333"/><polyline points="2.100,5.400 5.500,9.100 11.300,2.300" fill="none" stroke="#2a2a2a" stroke-width="1.300"/></svg>
<span id="t35" class="t" style="left:1247.60px;top:288.64px;font-size:11px;line-height:14px;color:#000;letter-spacing:0.145px;">Include Raft</span>
<svg style="left:1338px;top:289px" width="13" height="13" viewBox="0 0 13 13"><rect x="0.500" y="0.500" width="12" height="12" fill="#fff" stroke="#333"/><polyline points="2.100,5.400 5.500,9.100 11.300,2.300" fill="none" stroke="#2a2a2a" stroke-width="1.300"/></svg>
<span id="t36" class="t" style="left:1355.60px;top:288.64px;font-size:11px;line-height:14px;color:#000;letter-spacing:-0.004px;">Generate Support</span>
<div style="position:absolute;left:809px;top:352px;width:637px;height:392px;box-sizing:border-box;border:1px solid #d9d9d9;background:#fff;"></div>
<div style="position:absolute;left:811px;top:334px;width:64px;height:19px;box-sizing:border-box;border:1px solid #d9d9d9;background:#f0f0f0;"></div>
<span id="t37" class="t" style="left:820.00px;top:337.34px;font-size:11px;line-height:14px;color:#000;letter-spacing:0.203px;">Extruder</span>
<div style="position:absolute;left:874px;top:334px;width:52px;height:19px;box-sizing:border-box;border:1px solid #d9d9d9;background:#f0f0f0;"></div>
<span id="t38" class="t" style="left:886.10px;top:337.34px;font-size:11px;line-height:14px;color:#000;letter-spacing:0.092px;">Layer</span>
<div style="position:absolute;left:925px;top:334px;width:45px;height:19px;box-sizing:border-box;border:1px solid #d9d9d9;background:#f0f0f0;"></div>
<span id="t39" class="t" style="left:937.40px;top:337.34px;font-size:11px;line-height:14px;color:#000;letter-spacing:0.287px;">Infill</span>
<div style="position:absolute;left:969px;top:334px;width:63px;height:19px;box-sizing:border-box;border:1px solid #d9d9d9;background:#f0f0f0;"></div>
<span id="t40" class="t" style="left:981.10px;top:337.34px;font-size:11px;line-height:14px;color:#000;letter-spacing:0.195px;">Support</span>
<div style="position:absolute;left:1031px;top:334px;width:86px;height:19px;box-sizing:border-box;border:1px solid #d9d9d9;background:#f0f0f0;"></div>
<span id="t41" class="t" style="left:1043.10px;top:337.34px;font-size:11px;line-height:14px;color:#000;letter-spacing:0.043px;">Temperature</span>
<div style="position:absolute;left:1116px;top:334px;width:60px;height:19px;box-sizing:border-box;border:1px solid #d9d9d9;background:#f0f0f0;"></div>
<span id="t42" class="t" style="left:1128.70px;top:337.34px;font-size:11px;line-height:14px;color:#000;letter-spacing:-0.369px;">Cooling</span>
<div style="position:absolute;left:1175px;top:334px;width:61px;height:19px;box-sizing:border-box;border:1px solid #d9d9d9;background:#f0f0f0;"></div>
<span id="t43" class="t" style="left:1187.20px;top:337.34px;font-size:11px;line-height:14px;color:#000;letter-spacing:-0.266px;">G-Code</span>
<div style="position:absolute;left:1235px;top:334px;width:56px;height:19px;box-sizing:border-box;border:1px solid #d9d9d9;background:#f0f0f0;"></div>
<span id="t44" class="t" style="left:1247.20px;top:337.34px;font-size:11px;line-height:14px;color:#000;letter-spacing:-0.071px;">Scripts</span>
<div style="position:absolute;left:1345px;top:334px;width:69px;height:19px;box-sizing:border-box;border:1px solid #d9d9d9;background:#f0f0f0;"></div>
<span id="t45" class="t" style="left:1355.50px;top:337.34px;font-size:11px;line-height:14px;color:#000;letter-spacing:0.009px;">Advanced</span>
<div style="position:absolute;left:1290px;top:332px;width:56px;height:21px;box-sizing:border-box;border:1px solid #d9d9d9;border-bottom:none;background:#fff;"></div>
<span id="t46" class="t" style="left:1303.30px;top:336.34px;font-size:11px;line-height:14px;color:#000;letter-spacing:0.321px;">Other</span>
<div class="gb" style="left:820px;top:369px;width:307px;height:150px;border-color:#dcdcdc;"></div><div style="position:absolute;left:825.7px;top:363px;width:41.6px;height:13px;background:#fff;"></div><span id="t47" class="t" style="left:828.70px;top:363.24px;font-size:11px;line-height:14px;color:#000;letter-spacing:-0.342px;">Speeds</span>
<span id="t48" class="t" style="left:829.60px;top:390.24px;font-size:11px;line-height:14px;color:#000;letter-spacing:-0.123px;">Default Printing Speed</span>
<div style="position:absolute;left:983px;top:386px;width:71px;height:20px;box-sizing:border-box;border:1px solid #7a7a7a;background:#fff;"></div><div style="position:absolute;left:1038px;top:388px;width:14px;height:16px;box-sizing:border-box;border:1px solid #cdcdcd;background:#ebebeb;"></div><div style="position:absolute;left:1038px;top:396px;width:14px;height:1px;background:#cdcdcd;"></div><svg style="left:1041.5px;top:390px" width="7" height="12" viewBox="0 0 7 12"><polygon points="0.900,4 3.500,1 6.100,4" fill="#111"/><polygon points="0.900,8 3.500,11 6.100,8" fill="#111"/></svg><span id="t49" class="t" style="left:987.30px;top:390.24px;font-size:11px;line-height:14px;color:#000;letter-spacing:0.192px;">900,0</span>
<span id="t50" class="t" style="left:1059.60px;top:390.24px;font-size:11px;line-height:14px;color:#000;letter-spacing:0.000px;transform:scaleX(0.9307);transform-origin:0 0;">mm/min</span>
<span id="t51" class="t" style="left:829.60px;top:416.24px;font-size:11px;line-height:14px;color:#000;letter-spacing:-0.138px;">Outline Underspeed</span>
<div style="position:absolute;left:983px;top:412px;width:71px;height:20px;box-sizing:border-box;border:1px solid #7a7a7a;background:#fff;"></div><div style="position:absolute;left:1038px;top:414px;width:14px;height:16px;box-sizing:border-box;border:1px solid #cdcdcd;background:#ebebeb;"></div><div style="position:absolute;left:1038px;top:422px;width:14px;height:1px;background:#cdcdcd;"></div><svg style="left:1041.5px;top:416px" width="7" height="12" viewBox="0 0 7 12"><polygon points="0.900,4 3.500,1 6.100,4" fill="#111"/><polygon points="0.900,8 3.500,11 6.100,8" fill="#111"/></svg><span id="t52" class="t" style="left:987.30px;top:416.24px;font-size:11px;line-height:14px;color:#000;letter-spacing:-0.150px;">50</span>
<span id="t53" class="t" style="left:1060.70px;top:416.24px;font-size:11px;line-height:14px;color:#000;letter-spacing:0.000px;">%</span>
<span id="t54" class="t" style="left:829.60px;top:442.24px;font-size:11px;line-height:14px;color:#000;letter-spacing:-0.070px;">Support Structure Underspeed</span>
<div style="position:absolute;left:983px;top:438px;width:71px;height:20px;box-sizing:border-box;border:1px solid #7a7a7a;background:#fff;"></div><div style="position:absolute;left:1038px;top:440px;width:14px;height:16px;box-sizing:border-box;border:1px solid #cdcdcd;background:#ebebeb;"></div><div style="position:absolute;left:1038px;top:448px;width:14px;height:1px;background:#cdcdcd;"></div><svg style="left:1041.5px;top:442px" width="7" height="12" viewBox="0 0 7 12"><polygon points="0.900,4 3.500,1 6.100,4" fill="#111"/><polygon points="0.900,8 3.500,11 6.100,8" fill="#111"/></svg><span id="t55" class="t" style="left:987.30px;top:442.24px;font-size:11px;line-height:14px;color:#000;letter-spacing:-0.150px;">90</span>
<span id="t56" class="t" style="left:1060.70px;top:442.24px;font-size:11px;line-height:14px;color:#000;letter-spacing:0.000px;">%</span>
<span id="t57" class="t" style="left:829.60px;top:468.24px;font-size:11px;line-height:14px;color:#000;letter-spacing:-0.207px;">X/Y Axis Movement Speed</span>
<div style="position:absolute;left:983px;top:464px;width:71px;height:20px;box-sizing:border-box;border:1px solid #7a7a7a;background:#fff;"></div><div style="position:absolute;left:1038px;top:466px;width:14px;height:16px;box-sizing:border-box;border:1px solid #cdcdcd;background:#ebebeb;"></div><div style="position:absolute;left:1038px;top:474px;width:14px;height:1px;background:#cdcdcd;"></div><svg style="left:1041.5px;top:468px" width="7" height="12" viewBox="0 0 7 12"><polygon points="0.900,4 3.500,1 6.100,4" fill="#111"/><polygon points="0.900,8 3.500,11 6.100,8" fill="#111"/></svg><span id="t58" class="t" style="left:987.30px;top:468.24px;font-size:11px;line-height:14px;color:#000;letter-spacing:0.192px;">900,0</span>
<span id="t59" class="t" style="left:1059.60px;top:468.24px;font-size:11px;line-height:14px;color:#000;letter-spacing:0.000px;transform:scaleX(0.9307);transform-origin:0 0;">mm/min</span>
<span id="t60" class="t" style="left:829.60px;top:494.24px;font-size:11px;line-height:14px;color:#000;letter-spacing:-0.187px;">Z Axis Movement Speed</span>
<div style="position:absolute;left:983px;top:490px;width:71px;height:20px;box-sizing:border-box;border:1px solid #7a7a7a;background:#fff;"></div><div style="position:absolute;left:1038px;top:492px;width:14px;height:16px;box-sizing:border-box;border:1px solid #cdcdcd;background:#ebebeb;"></div><div style="position:absolute;left:1038px;top:500px;width:14px;height:1px;background:#cdcdcd;"></div><svg style="left:1041.5px;top:494px" width="7" height="12" viewBox="0 0 7 12"><polygon points="0.900,4 3.500,1 6.100,4" fill="#111"/><polygon points="0.900,8 3.500,11 6.100,8" fill="#111"/></svg><span id="t61" class="t" style="left:987.30px;top:494.24px;font-size:11px;line-height:14px;color:#000;letter-spacing:0.192px;">300,0</span>
<span id="t62" class="t" style="left:1059.60px;top:494.24px;font-size:11px;line-height:14px;color:#000;letter-spacing:0.000px;transform:scaleX(0.9307);transform-origin:0 0;">mm/min</span>
<div class="gb" style="left:1146px;top:369px;width:289px;height:46px;border-color:#dcdcdc;"></div><div style="position:absolute;left:1151.4px;top:363px;width:98.9px;height:13px;background:#fff;"></div><span id="t63" class="t" style="left:1154.40px;top:363.24px;font-size:11px;line-height:14px;color:#000;letter-spacing:-0.137px;">Filament Properties</span>
<span id="t64" class="t" style="left:1155.40px;top:390.24px;font-size:11px;line-height:14px;color:#000;letter-spacing:-0.165px;">Filament diameter</span>
<div style="position:absolute;left:1247px;top:386px;width:65px;height:20px;box-sizing:border-box;border:1px solid #7a7a7a;background:#fff;"></div><div style="position:absolute;left:1296px;top:388px;width:14px;height:16px;box-sizing:border-box;border:1px solid #cdcdcd;background:#ebebeb;"></div><div style="position:absolute;left:1296px;top:396px;width:14px;height:1px;background:#cdcdcd;"></div><svg style="left:1299.5px;top:390px" width="7" height="12" viewBox="0 0 7 12"><polygon points="0.900,4 3.500,1 6.100,4" fill="#111"/><polygon points="0.900,8 3.500,11 6.100,8" fill="#111"/></svg><span id="t65" class="t" style="left:1251.30px;top:390.24px;font-size:11px;line-height:14px;color:#000;letter-spacing:-0.131px;">1,7500</span>
<span id="t66" class="t" style="left:1317.60px;top:390.24px;font-size:11px;line-height:14px;color:#000;letter-spacing:0.000px;transform:scaleX(0.9003);transform-origin:0 0;">mm</span>
<div class="gb" style="left:1146px;top:438px;width:289px;height:98px;border-color:#dcdcdc;"></div><div style="position:absolute;left:1151.4px;top:432px;width:45px;height:13px;background:#fff;"></div><span id="t67" class="t" style="left:1154.40px;top:432.24px;font-size:11px;line-height:14px;color:#000;letter-spacing:-0.194px;">Bridging</span>
<span id="t68" class="t" style="left:1155.40px;top:459.24px;font-size:11px;line-height:14px;color:#000;letter-spacing:-0.023px;">Unsupported area threshold</span>
<div style="position:absolute;left:1297px;top:455px;width:71px;height:20px;box-sizing:border-box;border:1px solid #7a7a7a;background:#fff;"></div><div style="position:absolute;left:1352px;top:457px;width:14px;height:16px;box-sizing:border-box;border:1px solid #cdcdcd;background:#ebebeb;"></div><div style="position:absolute;left:1352px;top:465px;width:14px;height:1px;background:#cdcdcd;"></div><svg style="left:1355.5px;top:459px" width="7" height="12" viewBox="0 0 7 12"><polygon points="0.900,4 3.500,1 6.100,4" fill="#111"/><polygon points="0.900,8 3.500,11 6.100,8" fill="#111"/></svg><span id="t69" class="t" style="left:1301.30px;top:459.24px;font-size:11px;line-height:14px;color:#000;letter-spacing:0.093px;">50,0</span>
<span id="t70" class="t" style="left:1373.50px;top:459.24px;font-size:11px;line-height:14px;color:#000;letter-spacing:0.000px;transform:scaleX(0.9273);transform-origin:0 0;">sq mm</span>
<span id="t71" class="t" style="left:1155.40px;top:485.24px;font-size:11px;line-height:14px;color:#000;letter-spacing:-0.129px;">Bridging extrusion multiplier</span>
<div style="position:absolute;left:1297px;top:481px;width:71px;height:20px;box-sizing:border-box;border:1px solid #7a7a7a;background:#fff;"></div><div style="position:absolute;left:1352px;top:483px;width:14px;height:16px;box-sizing:border-box;border:1px solid #cdcdcd;background:#ebebeb;"></div><div style="position:absolute;left:1352px;top:491px;width:14px;height:1px;background:#cdcdcd;"></div><svg style="left:1355.5px;top:485px" width="7" height="12" viewBox="0 0 7 12"><polygon points="0.900,4 3.500,1 6.100,4" fill="#111"/><polygon points="0.900,8 3.500,11 6.100,8" fill="#111"/></svg><span id="t72" class="t" style="left:1301.30px;top:485.24px;font-size:11px;line-height:14px;color:#000;letter-spacing:0.000px;transform:scaleX(0.9477);transform-origin:0 0;">100</span>
<span id="t73" class="t" style="left:1374.80px;top:485.24px;font-size:11px;line-height:14px;color:#000;letter-spacing:0.000px;">%</span>
<span id="t74" class="t" style="left:1155.40px;top:511.24px;font-size:11px;line-height:14px;color:#000;letter-spacing:-0.211px;">Bridging speed multiplier</span>
<div style="position:absolute;left:1297px;top:507px;width:71px;height:20px;box-sizing:border-box;border:1px solid #7a7a7a;background:#fff;"></div><div style="position:absolute;left:1352px;top:509px;width:14px;height:16px;box-sizing:border-box;border:1px solid #cdcdcd;background:#ebebeb;"></div><div style="position:absolute;left:1352px;top:517px;width:14px;height:1px;background:#cdcdcd;"></div><svg style="left:1355.5px;top:511px" width="7" height="12" viewBox="0 0 7 12"><polygon points="0.900,4 3.500,1 6.100,4" fill="#111"/><polygon points="0.900,8 3.500,11 6.100,8" fill="#111"/></svg><span id="t75" class="t" style="left:1301.30px;top:511.24px;font-size:11px;line-height:14px;color:#000;letter-spacing:-0.150px;">50</span>
<span id="t76" class="t" style="left:1374.80px;top:511.24px;font-size:11px;line-height:14px;color:#000;letter-spacing:0.000px;">%</span>
<div class="btn" style="left:801px;top:761px;width:90px;height:21px;"></div>
<span id="t77" class="t" style="left:809.20px;top:765.24px;font-size:11px;line-height:14px;color:#000;letter-spacing:-0.075px;">Hide Advanced</span>
<div class="btn" style="left:899px;top:761px;width:83px;height:21px;"></div>
<span id="t78" class="t" style="left:907.20px;top:765.24px;font-size:11px;line-height:14px;color:#000;letter-spacing:-0.266px;">Select Models</span>
<div class="btn" style="left:1383px;top:761px;width:73px;height:21px;"></div>
<span id="t79" class="t" style="left:1402.30px;top:765.24px;font-size:11px;line-height:14px;color:#000;letter-spacing:-0.230px;">Cancel</span>
<div class="btn" style="left:1302px;top:761px;width:73px;height:21px;border:2px solid #0078d7;"></div>
<span id="t80" class="t" style="left:1330.50px;top:765.24px;font-size:11px;line-height:14px;color:#000;letter-spacing:0.000px;transform:scaleX(0.9556);transform-origin:0 0;">OK</span>
<div style="position:absolute;left:0px;top:1040px;width:1920px;height:40px;background:#03050b;"></div>
<svg style="left:0;top:1040px" width="1920" height="40" viewBox="0 1040 1920 40"><rect x="588" y="1040" width="48" height="40" fill="#37393b"/><rect x="151.5" y="1078" width="39.5" height="2" fill="#76b9ed"/><rect x="200" y="1078" width="40" height="2" fill="#76b9ed"/><rect x="298" y="1078" width="40" height="2" fill="#76b9ed"/><rect x="347" y="1078" width="40" height="2" fill="#76b9ed"/><rect x="396" y="1078" width="40" height="2" fill="#76b9ed"/><rect x="445" y="1078" width="31.5" height="2" fill="#76b9ed"/><rect x="641" y="1078" width="40" height="2" fill="#76b9ed"/><rect x="477.5" y="1078" width="7.5" height="2" fill="#5a8fba"/><rect x="588" y="1078" width="48" height="2" fill="#8fcaf5"/><g fill="#fff"><polygon points="15.5,1054.2 22.6,1053.2 22.6,1059.5 15.5,1059.5"/><polygon points="23.6,1053.1 32.4,1051.9 32.4,1059.5 23.6,1059.5"/><polygon points="15.5,1060.5 22.6,1060.5 22.6,1066.8 15.5,1065.8"/><polygon points="23.6,1060.5 32.4,1060.5 32.4,1068 23.6,1066.9"/></g><g stroke="#fff" stroke-width="1.5" fill="none"><circle cx="74.5" cy="1058" r="5"/><line x1="70.8" y1="1061.8" x2="64.2" y2="1068.2"/></g><g stroke="#fff" stroke-width="1.2" fill="none"><rect x="114.5" y="1053.5" width="11" height="13"/><polyline points="112,1055.5 110.5,1055.5 110.5,1064.5 112,1064.5"/><polyline points="128,1055.5 129.5,1055.5 129.5,1064.5 128,1064.5"/></g><g><path d="M160.5 1052.5h8l1.5 1.5h11v14h-20.5z" fill="#f7d774"/><rect x="160.5" y="1056" width="20.5" height="11.5" fill="#fbe28f"/><path d="M165 1069v-6.5h11.5v6.5h-3v-3.5h-5.5v3.5z" fill="#2f9be0"/><rect x="161.5" y="1052.8" width="5" height="1.2" fill="#e8b830"/></g><g><ellipse cx="220" cy="1059.7" rx="11.2" ry="10.8" fill="#e0141e"/><ellipse cx="220" cy="1059.7" rx="5.2" ry="8" fill="#03050b"/><path d="M226.5 1051.2a10.8 10.8 0 0 1 0 17a9 12 0 0 0 0-17z" fill="#a00c14"/></g><g><rect x="257" y="1048.2" width="23.6" height="23.4" rx="1.5" fill="#0e6edc"/><circle cx="268.8" cy="1059.9" r="9.3" fill="#fff"/><path d="M261 1059.9l4.6-3v1.9h6.4v-1.9l4.6 3-4.6 3v-1.9h-6.4v1.9z" fill="#0e6edc"/></g><g><rect x="316" y="1050.5" width="13" height="18.5" fill="#fff" stroke="#2b579a" stroke-width="0.8"/><g stroke="#2b579a" stroke-width="1"><line x1="321" y1="1054" x2="327.5" y2="1054"/><line x1="321" y1="1056.5" x2="327.5" y2="1056.5"/><line x1="321" y1="1059" x2="327.5" y2="1059"/><line x1="321" y1="1061.5" x2="327.5" y2="1061.5"/><line x1="321" y1="1064" x2="327.5" y2="1064"/><line x1="321" y1="1066.5" x2="327.5" y2="1066.5"/></g><polygon points="306.8,1050.8 320,1048.8 320,1070.6 306.8,1068.6" fill="#2b579a"/><text x="309" y="1063.5" font-family="Liberation Sans" font-weight="bold" font-size="9" fill="#fff">W</text></g><g><circle cx="366.500" cy="1060" r="9.300" fill="#10a4f2"/><circle cx="361.300" cy="1054.600" r="6" fill="#10a4f2"/><circle cx="371.800" cy="1065.500" r="6" fill="#10a4f2"/><text x="360.700" y="1066.800" font-family="Liberation Sans" font-weight="bold" font-size="19" fill="#fff">S</text><circle cx="374.900" cy="1068.100" r="5.500" fill="#f5a81c" stroke="#fff" stroke-width="0.900"/><text x="372.500" y="1071.500" font-family="Liberation Sans" font-weight="bold" font-size="9.500" fill="#000">5</text></g><g><circle cx="416" cy="1059.700" r="11.200" fill="#db4437"/><path d="M416 1059.700L406.300 1054.100A11.200 11.200 0 0 0 410.400 1069.400z" fill="#0f9d58"/><path d="M416 1059.700L410.400 1069.400A11.200 11.200 0 0 0 427.200 1059.700z" fill="#0f9d58"/><path d="M416 1059.700L427.200 1059.700A11.200 11.200 0 0 1 410.400 1069.400z" fill="#ffcd40"/><path d="M406.300 1054.100A11.200 11.200 0 0 1 425.700 1054.100L416 1054.100z" fill="#db4437"/><path d="M416 1059.700L425.700 1054.100A11.200 11.200 0 0 1 421.600 1069.400z" fill="#ffcd40"/><path d="M416 1059.700L406.300 1054.100A11.200 11.200 0 0 0 410.400 1069.400z" fill="#0f9d58"/><circle cx="416" cy="1059.700" r="5.100" fill="#f1f1f1"/><circle cx="416" cy="1059.700" r="4.100" fill="#4285f4"/></g><g><circle cx="465" cy="1059.900" r="11.800" fill="#1e90f0"/><path d="M459.500 1054.500h11l-3.200 5.400l3.200 5.400h-11l3.200-5.400z" fill="#fff"/></g><g><defs><linearGradient id="mx" x1="0" y1="0" x2="1" y2="1"><stop offset="0" stop-color="#c8ece8"/><stop offset="0.450" stop-color="#4fcac4"/><stop offset="1" stop-color="#2ab4b0"/></linearGradient></defs><rect x="502.200" y="1048.200" width="23.800" height="23.600" fill="url(#mx)"/><polygon points="508.800,1050.500 516,1050.500 521.300,1058.300 514,1058.300 511.500,1054.300 508.800,1054.300" fill="#0f8e8c"/><polygon points="514,1058.300 521.300,1058.300 516,1066 508.800,1066 508.800,1062.300 511.500,1062.300" fill="#22a6a2"/><rect x="514.500" y="1067.200" width="11.500" height="4.600" fill="#e4f2f1"/><g fill="#7a8a8a"><rect x="516" y="1068.200" width="2.200" height="2.800"/><rect x="519" y="1068.200" width="2.200" height="2.800"/><rect x="522" y="1068.200" width="2.400" height="2.800"/></g></g><g><rect x="558.500" y="1056.500" width="8" height="5.500" rx="1" transform="rotate(-15 562.500 1059)" fill="#e01878"/><g fill="#2866b0"><rect x="552" y="1055" width="5" height="4.500" rx="1" transform="rotate(-30 554.500 1057)"/><rect x="563.500" y="1049.500" width="5" height="4.500" rx="1" transform="rotate(20 566 1051.500)"/><rect x="569.500" y="1058.500" width="5" height="5.500" rx="1" transform="rotate(-10 572 1061)"/><rect x="556" y="1065" width="6" height="5" rx="1" transform="rotate(-30 559 1067.500)"/></g></g><g><circle cx="661.200" cy="1059.700" r="11.900" fill="#70b23a"/><path d="M649.5 1058 a11.900 11.900 0 0 1 23.400 0 a14 10 0 0 0 -23.400 0z" fill="#8ccc55" fill-opacity="0.6"/><g stroke="#fff" fill="none"><path d="M653.800 1055.300 L660.800 1070.400" stroke-width="3.900"/><path d="M666.700 1053.700 L669.900 1062" stroke-width="3.600"/><path d="M657.500 1063.300 Q663.500 1068.800 670.400 1061.500" stroke-width="2.600"/></g></g><polyline points="1675,1062.800 1681,1056.600 1687,1062.800" fill="none" stroke="#fff" stroke-width="1.150"/><rect x="1697" y="1052" width="16" height="16" fill="#e0141e"/><g stroke="#fff" stroke-width="1.250" fill="none" stroke-linejoin="round"><path d="M1699.900 1064.500 C1698.200 1058 1702.200 1054.200 1708.700 1056.700 Z"/><path d="M1704.300 1060.600 L1708.500 1064.600 Q1710.300 1065.500 1710.900 1062.300"/><path d="M1702.500 1057.500 L1704.300 1060.600 M1706 1056.400 L1704.300 1060.600" stroke-width="0.700"/></g><g stroke="#fff" stroke-width="1.100" fill="none"><rect x="1726.500" y="1054.500" width="10" height="9"/><line x1="1730.500" y1="1063.500" x2="1730.500" y2="1066"/><line x1="1727" y1="1066.500" x2="1733.500" y2="1066.500"/><rect x="1721.500" y="1054.500" width="4.500" height="5"/><polyline points="1722.800,1056.300 1723.800,1057.600 1724.800,1056.300" stroke-width="0.800"/><line x1="1723.500" y1="1059.500" x2="1723.500" y2="1067"/></g><g stroke="#fff" stroke-width="1.100" fill="none"><polygon points="1745,1057.500 1747.500,1057.500 1750.500,1054.500 1750.500,1065.500 1747.500,1062.500 1745,1062.500"/><path d="M1753 1057.500q1.500 2.500 0 5"/><path d="M1755.500 1055.500q2.800 4.500 0 9"/><path d="M1758 1053.500q4 6.500 0 13"/></g><rect x="1915" y="1040" width="1" height="40" fill="#6a6a6a"/><path d="M1879 1052h16v13h-5.700l-1.200 2.600l-2.300-2.600h-6.800z" fill="#fff"/><g stroke="#03050b" stroke-width="1" shape-rendering="crispEdges"><line x1="1882" y1="1055.500" x2="1892" y2="1055.500"/><line x1="1882" y1="1058.500" x2="1892" y2="1058.500"/><line x1="1882" y1="1061.500" x2="1888" y2="1061.500"/></g><circle cx="1894.700" cy="1067.500" r="7.900" fill="#26272a" stroke="#77797c" stroke-width="1"/><path d="M1892.300 1064.600 l2.600-1.900 h1 v9.200 h-1.500 v-7.300 l-2.100 1.300z" fill="#fff"/></svg>
<svg style="left:602.1px;top:1048.7px" width="19.95" height="22.61" viewBox="0 0 15 17"><defs><linearGradient id="ai1602" x1="0" x2="1"><stop offset="0" stop-color="#7a1a8c"/><stop offset="0.5" stop-color="#e0107a"/><stop offset="1" stop-color="#7a1a8c"/></linearGradient><linearGradient id="ai2602" x1="0" x2="1"><stop offset="0" stop-color="#2f7a1c"/><stop offset="0.5" stop-color="#7ac83c"/><stop offset="1" stop-color="#2f7a1c"/></linearGradient><linearGradient id="ai3602" x1="0" x2="1"><stop offset="0" stop-color="#1c3fae"/><stop offset="0.5" stop-color="#1e8fe8"/><stop offset="1" stop-color="#1c3fae"/></linearGradient></defs><rect x="0.3" y="3" width="4.6" height="11" rx="1.6" fill="url(#ai1602)"/><rect x="10.1" y="3" width="4.6" height="11" rx="1.6" fill="url(#ai3602)"/><rect x="4.6" y="0.5" width="5.8" height="16" rx="2.2" fill="url(#ai2602)"/></svg>
<span id="t81" class="t" style="left:1772.30px;top:1052.96px;font-size:12px;line-height:15px;color:#fff;letter-spacing:0.000px;transform:scaleX(0.9404);transform-origin:0 0;">РУС</span>
<span id="t82" class="t" style="left:1820.50px;top:1043.96px;font-size:12px;line-height:15px;color:#fff;letter-spacing:0.000px;transform:scaleX(0.9190);transform-origin:0 0;">15:08</span>
<span id="t83" class="t" style="left:1807.00px;top:1061.96px;font-size:12px;line-height:15px;color:#fff;letter-spacing:0.000px;transform:scaleX(0.9157);transform-origin:0 0;">07.01.2017</span>
</body></html>
